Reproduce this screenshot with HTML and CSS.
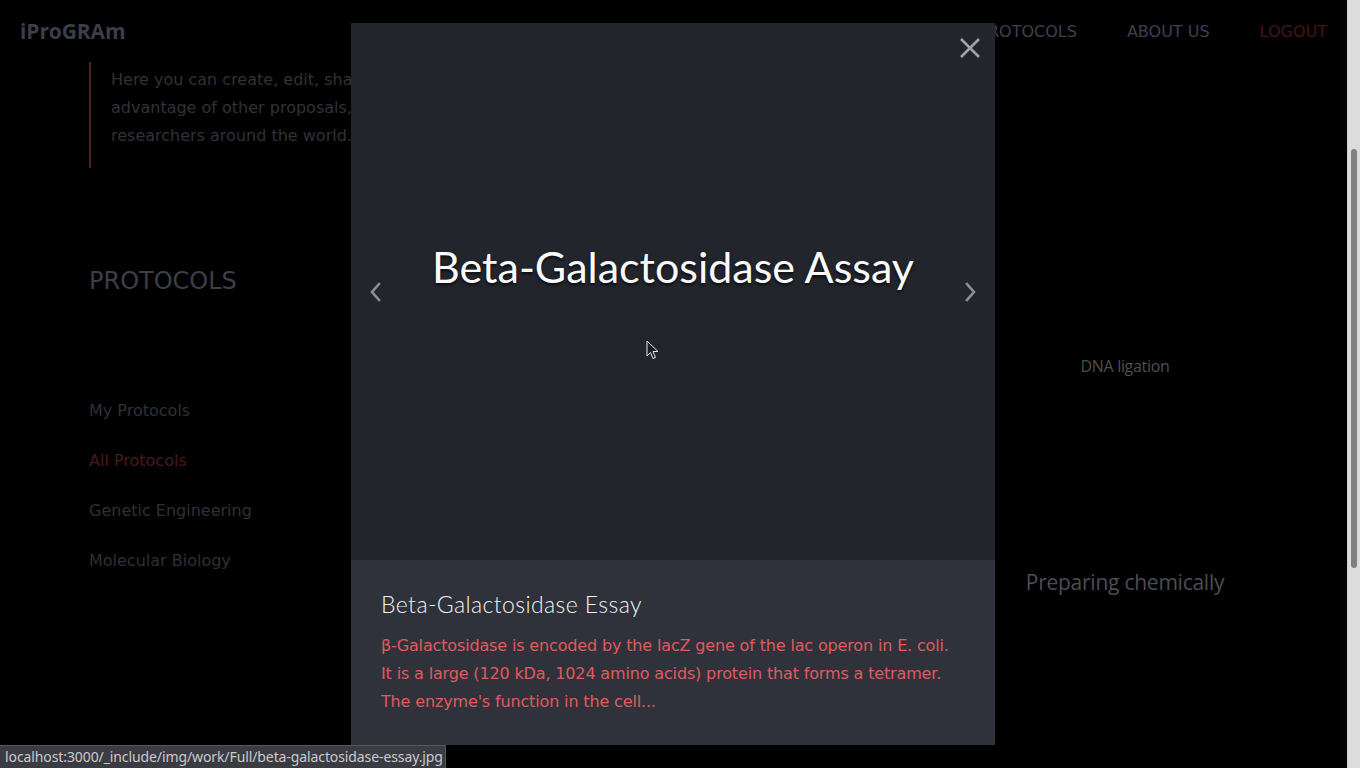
FILE: index.html
```html
<!DOCTYPE html>
<html lang="en">
<head>
<meta charset="utf-8">
<title>iProGRAm</title>
<link rel="stylesheet" href="styles.css">
</head>
<body>
<div class="page">
  <header class="topbar">
    <div class="logo">iProGRAm</div>
    <nav class="nav">
      <a class="nav-link">PROTOCOLS</a>
      <a class="nav-link">ABOUT US</a>
      <a class="nav-link logout">LOGOUT</a>
    </nav>
  </header>

  <blockquote class="intro">
    Here you can create, edit, share and take<br>
    advantage of other proposals, made by other<br>
    researchers around the world.
  </blockquote>

  <section class="protocols">
    <aside class="sidebar">
      <h2 class="section-title">PROTOCOLS</h2>
      <ul class="side-list">
        <li>My Protocols</li>
        <li class="active">All Protocols</li>
        <li>Genetic Engineering</li>
        <li>Molecular Biology</li>
      </ul>
    </aside>
    <div class="cards">
      <div class="card-col"></div>
      <div class="card-col"></div>
      <div class="card-col">
        <div class="card-small">DNA ligation</div>
        <div class="card-big">Preparing chemically</div>
      </div>
    </div>
  </section>
</div>

<div class="scrollbar"><div class="thumb"></div></div>

<div class="modal">
  <div class="modal-image">
    <button class="arrow arrow-left" aria-label="Previous">
      <svg width="14" height="20" viewBox="0 0 14 20"><path d="M11 2 L4 10 L11 18" fill="none" stroke="#8b8e94" stroke-width="2.6" stroke-linecap="square"/></svg>
    </button>
    <h1 class="modal-heading">Beta-Galactosidase Assay</h1>
    <button class="arrow arrow-right" aria-label="Next">
      <svg width="14" height="20" viewBox="0 0 14 20"><path d="M3 2 L10 10 L3 18" fill="none" stroke="#8b8e94" stroke-width="2.6" stroke-linecap="square"/></svg>
    </button>
    <button class="close" aria-label="Close">
      <svg width="22" height="22" viewBox="0 0 22 22"><path d="M2 2 L20 20 M20 2 L2 20" stroke="#a3a3a5" stroke-width="2.6"/></svg>
    </button>
    <svg class="cursor" width="14" height="20" viewBox="0 0 14 20"><path d="M1 1 L1 16 L4.5 12.5 L7 18.5 L9.5 17.5 L7 11.5 L12 11.5 Z" fill="#1c1e23" stroke="#e8e8e8" stroke-width="1"/></svg>
  </div>
  <div class="modal-caption">
    <h3 class="caption-title">Beta-Galactosidase Essay</h3>
    <p class="caption-text">β-Galactosidase is encoded by the lacZ gene of the lac operon in E. coli. It is a large (120 kDa, 1024 amino acids) protein that forms a tetramer. The enzyme's function in the cell...</p>
  </div>
</div>

<div class="statusbar">localhost:3000/_include/img/work/Full/beta-galactosidase-essay.jpg</div>
</body>
</html>
```

FILE: styles.css
```css
* { box-sizing: border-box; }
html, body {
  margin: 0;
  padding: 0;
  background: #000;
  overflow: hidden;
  height: 768px;
}
body {
  font-family: "DejaVu Sans", sans-serif;
}
.page {
  width: 1347px;
  height: 768px;
  background: #000;
}
.topbar {
  height: 62px;
  display: flex;
  align-items: center;
  justify-content: space-between;
  padding: 0 20px;
}
.logo {
  font-family: "Open Sans", sans-serif;
  font-weight: 700;
  font-size: 21px;
  letter-spacing: -0.1px;
  color: #3a3e48;
}
.nav {
  display: flex;
  gap: 50px;
}
.nav-link {
  font-size: 16px;
  color: #3c4150;
}
.nav-link.logout { color: #451517; }

.intro {
  margin: 0 0 0 89px;
  border-left: 2px solid #4e2224;
  padding: 4px 0 18px 20px;
  font-size: 16px;
  line-height: 28px;
  color: #303238;
}

.protocols {
  display: flex;
  margin-top: 98px;
  padding-left: 89px;
}
.sidebar { width: 261px; }
.section-title {
  margin: 0;
  font-weight: 400;
  font-size: 24px;
  line-height: 31px;
  color: #3b3f48;
}
.side-list {
  list-style: none;
  margin: 104px 0 0;
  padding: 0;
  display: flex;
  flex-direction: column;
  gap: 30px;
}
.side-list li {
  font-size: 16px;
  line-height: 20px;
  color: #2e3037;
}
.side-list li.active { color: #4a1a1d; }

.cards {
  flex: 1;
  display: grid;
  grid-template-columns: 1fr 1fr 250px;
  padding-right: 97px;
}
.card-col {
  display: flex;
  flex-direction: column;
  align-items: center;
  padding-top: 90px;
  font-family: "Open Sans", sans-serif;
}
.card-small {
  font-size: 16px;
  line-height: 20px;
  color: #4d4f55;
  letter-spacing: -0.3px;
}
.card-big {
  margin-top: 192px;
  font-size: 21px;
  line-height: 28px;
  color: #4b4d53;
  letter-spacing: -0.25px;
}

.scrollbar {
  position: fixed;
  top: 0;
  right: 0;
  width: 13px;
  height: 768px;
  background: #dcdcdc;
  border-left: 1px solid #cfcfcf;
}
.thumb {
  margin: 149px 0 0 3px;
  width: 6px;
  height: 419px;
  border-radius: 3px;
  background: #7e8181;
}

.modal {
  position: fixed;
  left: 351px;
  top: 23px;
  width: 644px;
  height: 722px;
  display: flex;
  flex-direction: column;
}
.modal-image {
  position: relative;
  height: 537px;
  background: #22252c;
  display: flex;
  align-items: center;
  justify-content: center;
  padding-bottom: 50px;
}
.modal-heading {
  margin: 0;
  font-family: "Lato", sans-serif;
  font-weight: 400;
  font-size: 43px;
  line-height: 50px;
  color: #fafafa;
  text-shadow: 0 2px 3px rgba(0,0,0,0.7);
}
.arrow {
  position: absolute;
  top: 245px;
  width: 48px;
  height: 48px;
  border: 0;
  padding: 0;
  background: transparent;
  display: flex;
  align-items: center;
  justify-content: center;
}
.arrow-left { left: 0; }
.arrow-right { right: 0; }
.close {
  position: absolute;
  top: 14px;
  right: 14px;
  width: 22px;
  height: 22px;
  border: 0;
  padding: 0;
  background: transparent;
}
.cursor {
  position: absolute;
  left: 295px;
  top: 317px;
}
.modal-caption {
  flex: 1;
  background: #2f323a;
  padding: 30px 30px 0;
}
.caption-title {
  margin: 0;
  font-family: "Lato", sans-serif;
  font-weight: 300;
  font-size: 23px;
  letter-spacing: 0.4px;
  line-height: 28px;
  color: #f2f2f2;
}
.caption-text {
  margin: 14px 0 0;
  max-width: 578px;
  font-size: 16px;
  letter-spacing: -0.15px;
  line-height: 28px;
  color: #e05a5a;
}

.statusbar {
  position: fixed;
  left: 0;
  bottom: 0;
  width: 446px;
  height: 23px;
  background: #3b3c42;
  border-top: 1px solid #56575c;
  border-right: 1px solid #56575c;
  padding-left: 5px;
  font-family: "Noto Sans", sans-serif;
  font-size: 14px;
  letter-spacing: -0.1px;
  line-height: 22px;
  color: #c9cad0;
  white-space: nowrap;
  overflow: hidden;
}
```
